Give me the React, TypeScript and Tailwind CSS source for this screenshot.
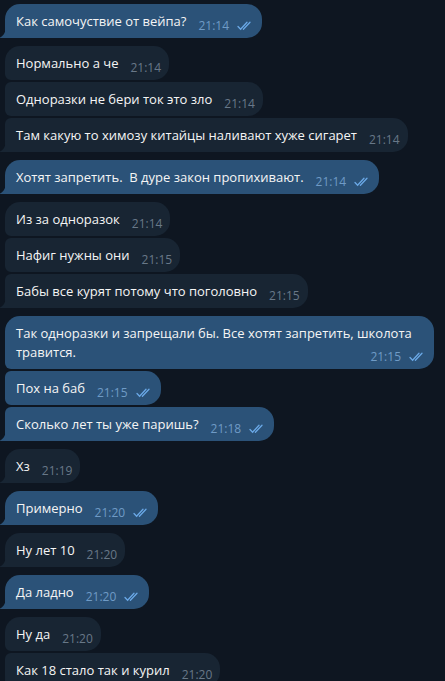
import React from "react";

type Msg = { text: string; time: string; out?: boolean; wide?: boolean };

const messages: Msg[] = [
  { text: "Как самочуствие от вейпа?", time: "21:14", out: true },
  { text: "Нормально а че", time: "21:14" },
  { text: "Одноразки не бери ток это зло", time: "21:14" },
  { text: "Там какую то химозу китайцы наливают хуже сигарет", time: "21:14" },
  { text: "Хотят запретить.  В дуре закон пропихивают.", time: "21:14", out: true },
  { text: "Из за одноразок", time: "21:14" },
  { text: "Нафиг нужны они", time: "21:15" },
  { text: "Бабы все курят потому что поголовно", time: "21:15" },
  { text: "Так одноразки и запрещали бы. Все хотят запретить, школота травится.", time: "21:15", out: true, wide: true },
  { text: "Пох на баб", time: "21:15", out: true },
  { text: "Сколько лет ты уже паришь?", time: "21:18", out: true },
  { text: "Хз", time: "21:19" },
  { text: "Примерно", time: "21:20", out: true },
  { text: "Ну лет 10", time: "21:20" },
  { text: "Да ладно", time: "21:20", out: true },
  { text: "Ну да", time: "21:20" },
  { text: "Как 18 стало так и курил", time: "21:20" },
];

function Checks() {
  return (
    <svg width="17" height="10" viewBox="0 0 17 10" fill="none" stroke="#6aa8e6" strokeWidth="1.3" strokeLinecap="round">
      <path d="M1 5.5 L3.6 8.3 L10 1.2" />
      <path d="M6.4 8.3 L13 1.2" />
    </svg>
  );
}

function Tail({ color }: { color: string }) {
  return (
    <svg className="absolute bottom-0 left-[-6px]" width="7" height="11" viewBox="0 0 7 11">
      <path d="M7 0 L7 11 L0 11 C3 10 6.5 7 7 0 Z" fill={color} />
    </svg>
  );
}

function Time({ m }: { m: Msg }) {
  return (
    <span className={"ml-[12px] shrink-0 flex items-center gap-[8px] text-[12px] leading-[19px] translate-y-[4px] " + (m.out ? "text-[#6f9bc6]" : "text-[#687888]")}>
      {m.time}
      {m.out && <Checks />}
    </span>
  );
}

function Bubble({ m, first, last }: { m: Msg; first: boolean; last: boolean }) {
  const color = m.out ? "#2b5278" : "#182533";
  const bg = m.out ? "bg-[#2b5278]" : "bg-[#182533]";
  const tl = first ? "rounded-tl-[15px]" : "rounded-tl-[6px]";
  const bl = last ? "rounded-bl-none" : "rounded-bl-[6px]";
  if (m.wide) {
    return (
      <div className={"relative w-[429px] rounded-r-[15px] pl-[11px] pr-[8px] pt-[8px] pb-[7px] " + bg + " " + tl + " " + bl}>
        <div className="leading-[19px]">Так одноразки и запрещали бы. Все хотят запретить, школота</div>
        <div className="flex items-end justify-between">
          <span className="leading-[19px]">травится.</span>
          <Time m={m} />
        </div>
        {last && <Tail color={color} />}
      </div>
    );
  }
  return (
    <div className={"relative flex items-end self-start rounded-r-[15px] pl-[11px] pr-[8px] pt-[8px] pb-[7px] " + bg + " " + tl + " " + bl}>
      <span className="leading-[19px] whitespace-pre">{m.text}</span>
      <Time m={m} />
      {last && <Tail color={color} />}
    </div>
  );
}

export default function App() {
  return (
    <div className="h-[681px] w-[445px] overflow-hidden bg-[#0e1621] text-[#f5f5f5] text-[13px]" style={{ fontFamily: '"Open Sans", "Noto Sans", sans-serif' }}>
      <div className="flex flex-col pl-[5px] pt-[4px]">
        {messages.map((m, i) => {
          const prev = messages[i - 1];
          const next = messages[i + 1];
          const first = !prev || !!prev.out !== !!m.out;
          const last = !next || !!next.out !== !!m.out;
          return (
            <div key={i} className={"flex flex-col " + (i === 0 ? "" : first ? "mt-[8px]" : "mt-[2px]")}>
              <Bubble m={m} first={first} last={last} />
            </div>
          );
        })}
      </div>
    </div>
  );
}
